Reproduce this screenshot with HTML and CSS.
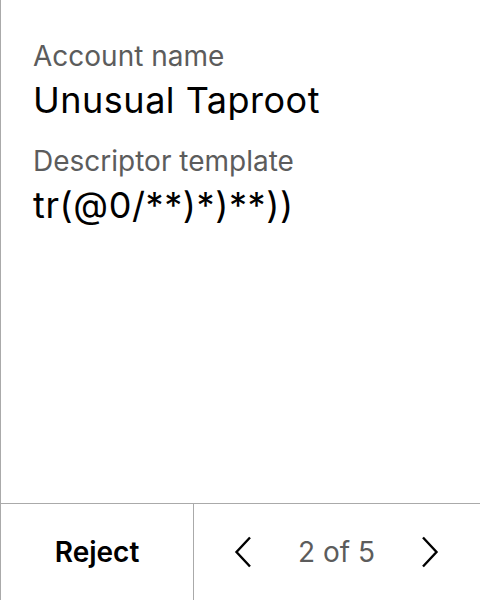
FILE: index.html
```html
<!DOCTYPE html>
<html>
<head>
<meta charset="utf-8">
<link rel="stylesheet" href="styles.css">
</head>
<body>
<div class="screen">
  <main class="content">
    <div class="field">
      <div class="label">Account name</div>
      <div class="value name">Unusual Taproot</div>
    </div>
    <div class="field">
      <div class="label">Descriptor template</div>
      <div class="value desc">tr(@0/**)*)**))</div>
    </div>
  </main>
  <footer class="footer">
    <div class="reject">Reject</div>
    <div class="pager">
      <svg class="chev" width="18" height="32" viewBox="0 0 18 32"><path d="M16 1.5 L2.5 16 L16 30.5" fill="none" stroke="#000" stroke-width="2.4"/></svg>
      <span class="count">2 of 5</span>
      <svg class="chev" width="18" height="32" viewBox="0 0 18 32"><path d="M2 1.5 L15.5 16 L2 30.5" fill="none" stroke="#000" stroke-width="2.4"/></svg>
    </div>
  </footer>
</div>
</body>
</html>
```
FILE: styles.css
```css
html, body { margin: 0; padding: 0; background: #fff; }
body { font-family: Inter, "Noto Sans", sans-serif; }
.screen {
  width: 480px; height: 600px; box-sizing: border-box;
  border-left: 1px solid #aaa;
  display: flex; flex-direction: column;
}
.content { flex: 1; padding: 38px 0 0 32px; display: flex; flex-direction: column; gap: 21px; }
.label { font-size: 28px; color: #5c5c5c; line-height: 36px; }
.value { color: #000; font-size: 36px; line-height: 44px; margin-top: 4px; }
.name { letter-spacing: 0.5px; }
.desc { letter-spacing: 0.6px; }
.footer {
  height: 96px; border-top: 1px solid #aaa;
  display: flex;
}
.reject {
  width: 192px; border-right: 1px solid #aaa;
  display: flex; align-items: center; justify-content: center;
  font-size: 28px; font-weight: 600;
}
.pager { flex: 1; display: flex; align-items: center; justify-content: space-between; padding: 0 41px 0 40px; }
.count { font-size: 28px; color: #5c5c5c; }
.chev { display: block; }
```
